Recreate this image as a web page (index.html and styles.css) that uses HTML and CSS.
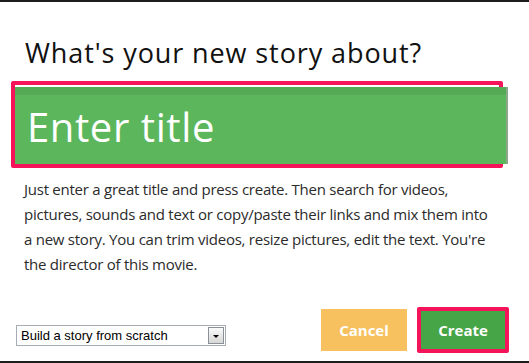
FILE: index.html
```html
<!DOCTYPE html>
<html lang="en">
<head>
  <meta charset="UTF-8">
  <title>New story</title>
  <link rel="stylesheet" href="styles.css">
</head>
<body>
<div class="topbar"></div>
<div class="dialog">
  <h1>What's your new story about?</h1>
  <div class="mark title-mark">
    <input type="text" class="title-input" placeholder="Enter title">
  </div>
  <p class="intro">Just enter a great title and press create. Then search for videos, pictures, sounds and text or copy/paste their links and mix them into a new story. You can trim videos, resize pictures, edit the text. You're the director of this movie.</p>
  <div class="actions">
    <div class="select">
      <span class="select-label">Build a story from scratch</span>
      <span class="select-arrow"></span>
    </div>
    <div class="buttons">
      <button type="button" class="btn cancel">Cancel</button>
      <div class="mark create-mark">
        <button type="button" class="btn create">Create</button>
      </div>
    </div>
  </div>
</div>
<div class="bottombar"></div>
</body>
</html>
```

FILE: styles.css
```css
html, body { margin: 0; padding: 0; background: #fff; }
body { font-family: 'Open Sans', 'DejaVu Sans', sans-serif; color: #2b2b2b; width: 529px; height: 363px; display: flex; flex-direction: column; overflow: hidden; }
.topbar { height: 2px; background: #1c1c1c; }
.bottombar { height: 2px; background: #1c1c1c; }
.dialog { flex: 1; padding: 0 0 0 11px; display: flex; flex-direction: column; }
h1 { font-weight: 400; font-size: 27px; line-height: 32px; margin: 35px 0 0 14px; color: #111; letter-spacing: 0.9px; }

/* red annotation frames */
.mark { border: 4px solid #f5135a; border-radius: 2px; }
.title-mark { width: 484px; margin-top: 12px; padding-top: 2px; height: 77px; }
.title-input {
  display: block; width: 491px; height: 77px; box-sizing: border-box; border: none; outline: none;
  background: #5cb65c; box-shadow: inset 0 8px 0 #55aa55, 2px 0 0 #8ea88e;
  padding: 2px 0 0 12px; font-family: inherit; font-size: 40px; color: #fff; letter-spacing: 0.6px;
}
.title-input::placeholder { color: #fff; opacity: 1; }

.intro { font-size: 15px; line-height: 25px; letter-spacing: -0.25px; margin: 9px 0 0 13px; width: 475px; color: #2b2b2b; }

.actions { display: flex; align-items: center; justify-content: space-between; margin-top: auto; margin-bottom: 8px; padding-right: 20px; }
.select {
  width: 208px; height: 19px; margin: 10px 0 0 5px; border: 1px solid #a5acb5; display: flex; align-items: center; justify-content: space-between;
  font-family: 'Liberation Sans', Arial, sans-serif; font-size: 13px; color: #000;
}
.select-label { padding-left: 4px; }
.select-arrow { width: 16px; height: 17px; margin-right: 1px; border: 1px solid #8b8f96; box-sizing: border-box; background: linear-gradient(#fafafa, #d6d6d6); position: relative; }
.select-arrow::after { content: ""; position: absolute; left: 4px; top: 7px; border: 3px solid transparent; border-top: 3px solid #000; border-bottom: none; }
.buttons { display: flex; align-items: center; gap: 10px; }
.btn { border: none; font-family: 'Open Sans', sans-serif; font-weight: 700; font-size: 15px; color: #fff; cursor: pointer; }
.cancel { width: 86px; height: 42px; background: #f6c15e; }
.create { width: 84px; height: 38px; background: #46a546; display: block; }
```
